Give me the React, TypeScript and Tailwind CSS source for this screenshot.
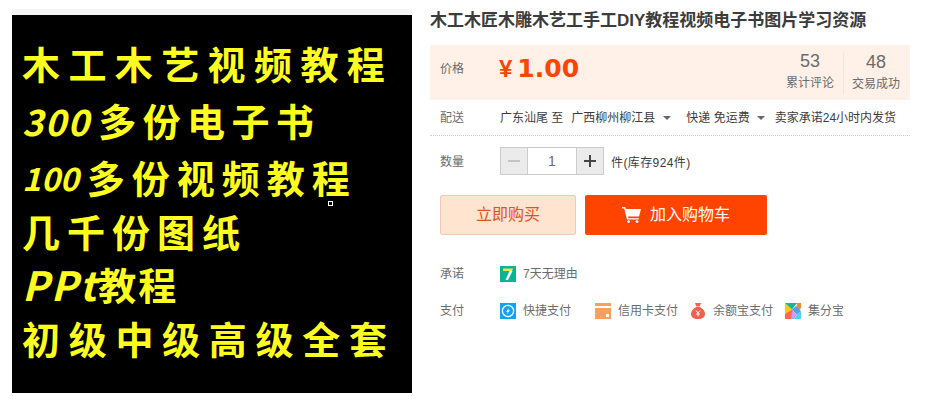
const cjk = "font-['Liberation_Sans','Noto_Sans_CJK_SC',sans-serif]";

function Poster() {
  const line = "h-[54px] flex items-center whitespace-nowrap font-bold text-[#ffff1e] text-[38px] leading-none";
  const digits = "italic font-semibold";
  return (
    <div className="relative w-[400px] h-[378px] bg-black pl-[10px] pt-[21px] flex flex-col font-['Noto_Sans_CJK_SC',sans-serif] overflow-hidden">
      <div className={`${line} tracking-[8.4px]`}>木工木艺视频教程</div>
      <div className={`${line} tracking-[6.4px] mt-[3px]`}>
        <span className={`${digits} text-[36px] tracking-[1.5px] mr-[8px]`}>300</span>多份电子书
      </div>
      <div className={`${line} tracking-[7px] mt-[3px]`}>
        <span className={`${digits} text-[32px] tracking-[0px] mr-[8px]`}>100</span>多份视频教程
      </div>
      <div className={`${line} tracking-[7px]`}>几千份图纸</div>
      <div className={`${line} -mt-[1px]`}>
        <span className={`${digits} text-[40px] tracking-[2px]`}>PPt</span>
        <span className="tracking-[2px]">教程</span>
      </div>
      <div className={`${line} tracking-[8.7px]`}>初级中级高级全套</div>
      <div className="absolute left-[316px] top-[186px] w-[5px] h-[5px] border border-white bg-black" />
    </div>
  );
}

function Caret() {
  return <span className="inline-block w-0 h-0 border-x-[4px] border-x-transparent border-t-[4px] border-t-[#666]" />;
}

function Cart() {
  return (
    <svg width="19" height="16" viewBox="0 0 19 16" fill="white">
      <path d="M0 0h3.200l.7 2H19l-2 7.600H6l.4 1.600h10.400v1.400H5L2.200 1.600H0z" />
      <circle cx="6.600" cy="14.600" r="1.400" />
      <circle cx="15" cy="14.600" r="1.400" />
    </svg>
  );
}

function Seven() {
  return (
    <svg width="16" height="16" viewBox="0 0 16 16">
      <rect width="16" height="16" fill="#0bb594" />
      <path d="M3 2.500h10L12 5H3z" fill="#f7e24b" />
      <path d="M9.500 5H12.500L8 14H5.500z" fill="#fff" />
    </svg>
  );
}

function Quick() {
  return (
    <svg width="16" height="16" viewBox="0 0 16 16">
      <rect width="16" height="16" fill="#0ea5f7" />
      <circle cx="8" cy="8" r="5.600" fill="none" stroke="#fff" strokeWidth="1.300" />
      <path d="M9.600 4.200 6 8.800h2l-1.400 3 3.400-4.600H8z" fill="#fff" />
    </svg>
  );
}

function CardIcon() {
  return (
    <svg width="16" height="16" viewBox="0 0 16 16">
      <path d="M0 0h16v3H0z" fill="#fd9f5b" />
      <path d="M0 5h16v11H0z" fill="#fd9f5b" />
      <path d="M11 11h3v3h-3z" fill="#fff" />
    </svg>
  );
}

function Bag() {
  return (
    <svg width="16" height="16" viewBox="0 0 16 16">
      <path d="M5 0h6L9.600 3.400H6.400z" fill="#f0604c" />
      <path d="M6 4h4c3 1.600 5 4.400 5 7 0 3-2.600 5-7 5s-7-2-7-5c0-2.600 2-5.400 5-7z" fill="#f0604c" />
      <path d="M6 7.500 8 10l2-2.500M8 10v3.400M6.200 11h3.600" fill="none" stroke="#fff" strokeWidth="1" />
    </svg>
  );
}

function Jifen() {
  return (
    <svg width="16" height="16" viewBox="0 0 16 16">
      <rect width="16" height="16" fill="#fff" />
      <path d="M0 0v11l7-4.500z" fill="#fbc90d" />
      <path d="M0 0h12L7 6.500z" fill="#17b890" />
      <path d="M12 0h4v5l-2 2-2.600-2.600z" fill="#ef8b2c" />
      <path d="M7 6.500 11 3l5 5-4 4z" fill="#5a9cf5" />
      <path d="M0 16v-5l7-4.500 4 5.500-5 4z" fill="#fb6a4a" />
      <path d="M7 8l5 4-3 4H6z" fill="#c99cf2" />
      <path d="M12 12l4-4v8H9z" fill="#4fd0f7" />
    </svg>
  );
}

function Pay({ icon, label, w }: { icon: React.ReactNode; label: string; w: string }) {
  return (
    <div className={`flex items-center gap-[7px] ${w}`}>
      {icon}
      <span>{label}</span>
    </div>
  );
}

export default function App() {
  return (
    <div className={`w-[928px] h-[416px] bg-white flex pl-[12px] pt-[9px] overflow-hidden ${cjk}`}>
      <div className="w-[400px] shrink-0">
        <div className="h-[6px] bg-[#f5f5f5]" />
        <Poster />
      </div>
      <div className="w-[480px] ml-[18px] text-[12px] text-[#6c6c6c]">
        <h1 className="h-[25px] -mt-[1px] pt-[2px] text-[17px] leading-[22px] font-bold text-[#3c3c3c] whitespace-nowrap">
          木工木匠木雕木艺工手工DIY教程视频电子书图片学习资源
        </h1>
        <div className="mt-[12px] h-[55px] bg-[#fff0e8] flex items-center pl-[10px]">
          <span className="w-[59px] -mt-[7px]">价格</span>
          <span className="text-[#ff4400] font-bold flex items-baseline flex-1 -mt-[9px]">
            <span className="text-[24px] leading-none mr-[5px]">¥</span>
            <span className="text-[25px] leading-none font-['DejaVu_Sans',sans-serif]">1.00</span>
          </span>
          <div className="w-[66px] flex flex-col items-center">
            <span className="text-[18px] leading-[22px] -mt-[3px] text-[#6c6c6c]">53</span>
            <span className="leading-[20px] mt-[1px] whitespace-nowrap">累计评论</span>
          </div>
          <div className="h-[42px] w-[67px] pr-[2px] border-l border-[#f5e5dc] flex flex-col items-center justify-center">
            <span className="text-[18px] leading-[22px] -mt-[1px] text-[#6c6c6c]">48</span>
            <span className="leading-[20px] mt-[1px] whitespace-nowrap">交易成功</span>
          </div>
        </div>
        <div className="h-[36px] pt-[1px] border-b border-dotted border-[#ccc] flex items-center pl-[10px] text-[#3c3c3c] whitespace-nowrap">
          <span className="w-[60px] text-[#6c6c6c]">配送</span>
          <span>广东汕尾 至</span>
          <span className="ml-[8px]">广西柳州柳江县</span>
          <span className="ml-[8px] flex"><Caret /></span>
          <span className="ml-[15px]">快递 免运费</span>
          <span className="ml-[7px] flex"><Caret /></span>
          <span className="ml-[10px]">卖家承诺24小时内发货</span>
        </div>
        <div className="mt-[11px] h-[28px] flex items-center pl-[10px]">
          <span className="w-[60px] mt-[2px]">数量</span>
          <div className="flex h-[28px] border border-[#ccc] w-[104px]">
            <span className="w-[26px] bg-[#ebebeb] flex items-center justify-center">
              <span className="w-[12px] h-[2px] bg-[#c4c4c4]" />
            </span>
            <span className="w-[50px] border-x border-[#ccc] bg-white flex items-center justify-center text-[14px] text-[#6c6c6c]">1</span>
            <span className="flex-1 bg-[#ebebeb] flex items-center justify-center relative">
              <span className="w-[12px] h-[2px] bg-[#444]" />
              <span className="absolute w-[2px] h-[12px] bg-[#444]" />
            </span>
          </div>
          <span className="ml-[7px] mt-[3px] tracking-[0.4px] text-[#3c3c3c]">件(库存924件)</span>
        </div>
        <div className="mt-[20px] flex pl-[10px] gap-[9px]">
          <button className="w-[136px] h-[40px] rounded-[2px] bg-[#ffe4d0] border border-[#f0cab6] text-[#e5511d] text-[16px]">立即购买</button>
          <button className="w-[182px] h-[40px] rounded-[2px] bg-[#ff4400] text-white text-[16px] flex items-center justify-center gap-[9px]">
            <Cart />
            加入购物车
          </button>
        </div>
        <div className="mt-[23px] h-[32px] flex items-center pl-[10px]">
          <span className="w-[60px]">承诺</span>
          <Pay icon={<Seven />} label="7天无理由" w="" />
        </div>
        <div className="mt-[5px] h-[32px] flex items-center pl-[10px]">
          <span className="w-[60px]">支付</span>
          <Pay icon={<Quick />} label="快捷支付" w="w-[95px]" />
          <Pay icon={<CardIcon />} label="信用卡支付" w="w-[95px]" />
          <Pay icon={<Bag />} label="余额宝支付" w="w-[95px]" />
          <Pay icon={<Jifen />} label="集分宝" w="" />
        </div>
      </div>
    </div>
  );
}
